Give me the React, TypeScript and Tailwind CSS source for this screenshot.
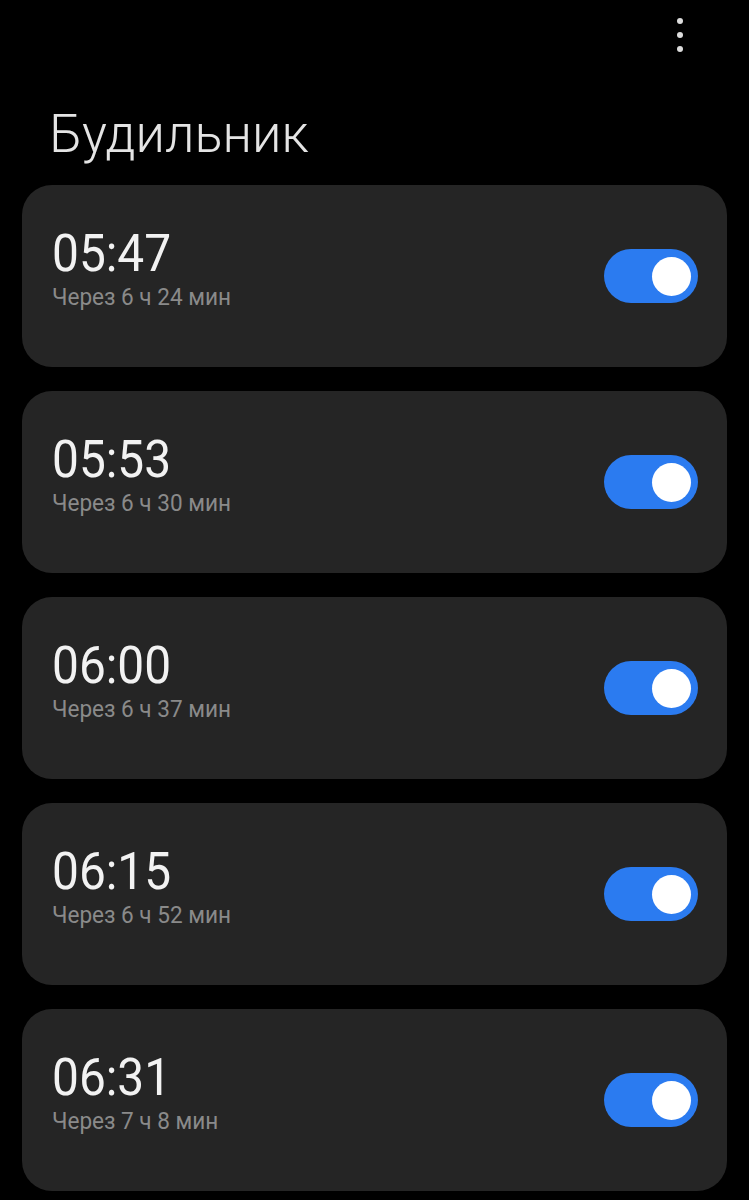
const alarms = [
  { time: "05:47", left: "Через 6 ч 24 мин" },
  { time: "05:53", left: "Через 6 ч 30 мин" },
  { time: "06:00", left: "Через 6 ч 37 мин" },
  { time: "06:15", left: "Через 6 ч 52 мин" },
  { time: "06:31", left: "Через 7 ч 8 мин" },
];

function Toggle() {
  return (
    <div className="flex h-[54px] w-[94px] shrink-0 items-center justify-end rounded-full bg-[#2b7bf0] pr-[7px]">
      <div className="h-[39px] w-[39px] rounded-full bg-white" />
    </div>
  );
}

export default function App() {
  return (
    <div
      className="min-h-[1200px] w-full bg-black px-[22px]"
      style={{ fontFamily: "Roboto, 'Noto Sans', sans-serif" }}
    >
      {/* Overflow menu */}
      <div className="flex justify-end pr-[44px] pt-[18px]">
        <div className="flex flex-col items-center gap-[8px]">
          <span className="h-[6px] w-[6px] rounded-full bg-[#dcdcdc]" />
          <span className="h-[6px] w-[6px] rounded-full bg-[#dcdcdc]" />
          <span className="h-[6px] w-[6px] rounded-full bg-[#dcdcdc]" />
        </div>
      </div>

      <h1 className="mb-[24px] mt-[55px] origin-left scale-x-[0.97] pl-[28px] text-[54px] font-light leading-[54px] text-[#e4e4e4]">
        Будильник
      </h1>

      <div className="flex flex-col gap-[24px]">
        {alarms.map((a) => (
          <div
            key={a.time}
            className="flex h-[182px] items-center justify-between rounded-[30px] bg-[#252525] pl-[30px] pr-[29px]"
          >
            <div className="-mt-[15px] flex flex-col">
              <span className="origin-left scale-x-[0.92] text-[52px] leading-[52px] text-[#f2f2f2]">
                {a.time}
              </span>
              <span className="mt-[5px] origin-left scale-x-[0.94] text-[24px] leading-[24px] text-[#8a8a8a]">
                {a.left}
              </span>
            </div>
            <Toggle />
          </div>
        ))}
      </div>
    </div>
  );
}
